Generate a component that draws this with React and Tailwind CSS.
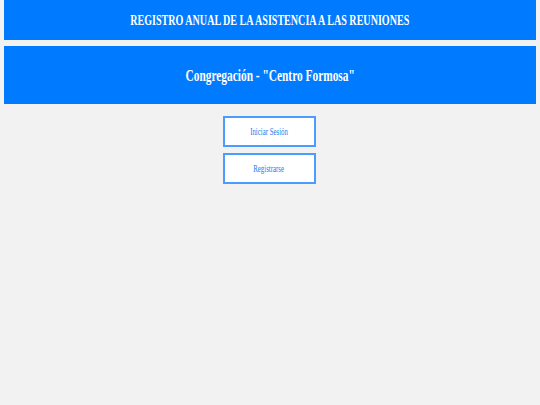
export default function App() {
  return (
    <div
      className="min-h-[405px] bg-[#f2f2f2] px-1"
      style={{ fontFamily: '"Liberation Serif", "Times New Roman", serif' }}
    >
      <header className="h-[40px] bg-[#007bff] flex items-center justify-center">
        <h1 className="inline-block scale-x-[0.65] whitespace-nowrap text-[15.5px] font-bold text-white">
          REGISTRO ANUAL DE LA ASISTENCIA A LAS REUNIONES
        </h1>
      </header>
      <section className="mt-[6px] h-[58px] bg-[#007bff] flex items-center justify-center">
        <h2 className="inline-block scale-x-[0.65] whitespace-nowrap text-[17.5px] font-bold text-white">
          Congregación - "Centro Formosa"
        </h2>
      </section>
      <div className="mt-3 flex flex-col items-center gap-[6px] pr-[2px]">
        <button className="w-[93px] h-[31px] bg-white border-2 border-[#4a9dff] flex items-center justify-center">
          <span className="inline-block scale-x-[0.65] whitespace-nowrap text-[10.5px] text-[#1a7df0]">
            Iniciar Sesión
          </span>
        </button>
        <button className="w-[93px] h-[31px] bg-white border-2 border-[#4a9dff] flex items-center justify-center">
          <span className="inline-block scale-x-[0.65] whitespace-nowrap text-[10.5px] text-[#1a7df0]">
            Registrarse
          </span>
        </button>
      </div>
    </div>
  );
}
